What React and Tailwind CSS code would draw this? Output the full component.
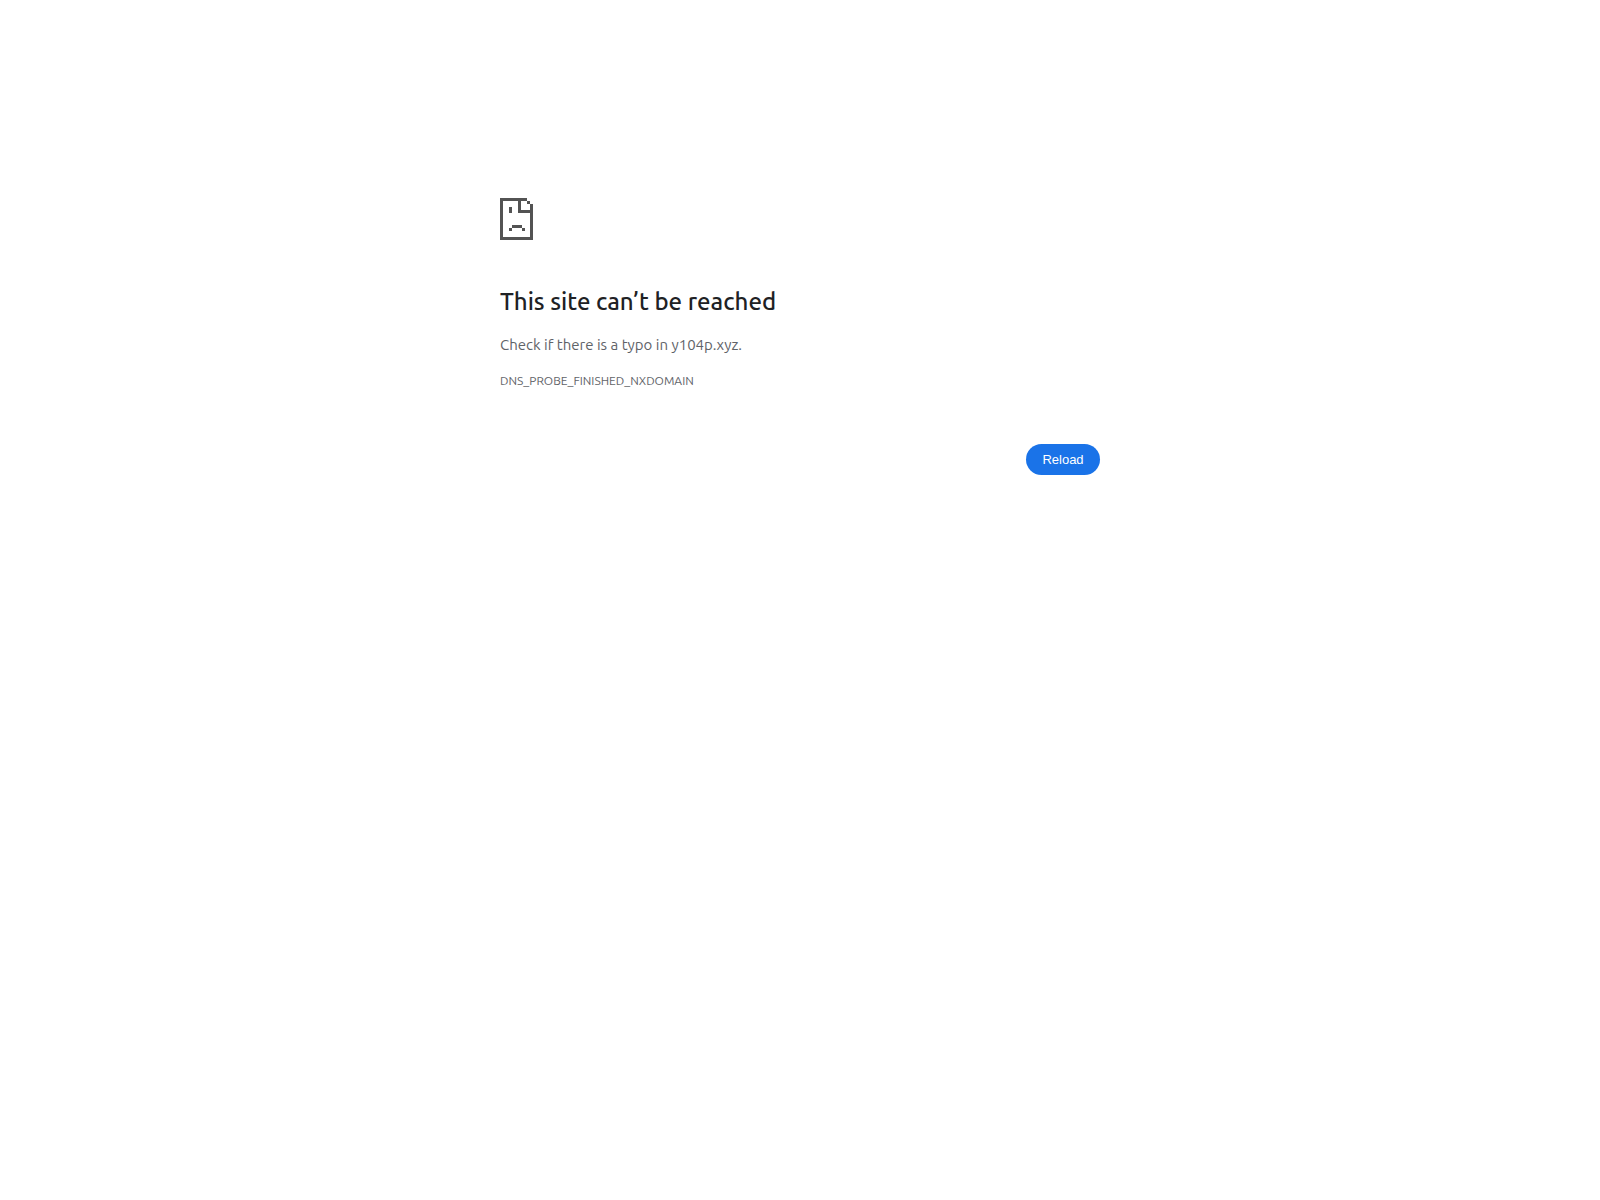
function SadPage() {
  return (
    <svg
      className="block h-[42px] w-[33px]"
      viewBox="0 0 33 42"
      fill="#535353"
      shapeRendering="crispEdges"
      aria-hidden="true"
    >
      <path d="M0 0h27v3H21v9h12v3H18V3H3v36h27V6h3v36H0z" />
      <path d="M27 3h3v3h-3zM9 9h3v6H9zM12 27h10v3H12zM9 30h3v3H9zM22 30h3v3h-3z" />
    </svg>
  );
}

export default function App() {
  return (
    <div className="min-h-screen bg-white px-6 pt-[198px] font-['Ubuntu','Noto_Sans',sans-serif] text-[#5f6368]">
      <main className="mx-auto max-w-[600px]">
        <SadPage />
        <h1 className="mt-[47px] text-[24px] leading-[30px] font-medium text-[#202124]">
          This site can’t be reached
        </h1>
        <p className="mt-4 text-[15px] leading-6">
          Check if there is a typo in y104p.xyz.
        </p>
        <p className="mt-[15px] text-[12px] leading-[18px]">DNS_PROBE_FINISHED_NXDOMAIN</p>
        <div className="mt-[54px] flex justify-end">
          <button
            type="button"
            className="min-w-[74px] cursor-pointer rounded-full bg-[#1a73e8] px-4 py-2 font-['Liberation_Sans',sans-serif] text-[13px] leading-[15px] text-white"
          >
            Reload
          </button>
        </div>
      </main>
    </div>
  );
}
